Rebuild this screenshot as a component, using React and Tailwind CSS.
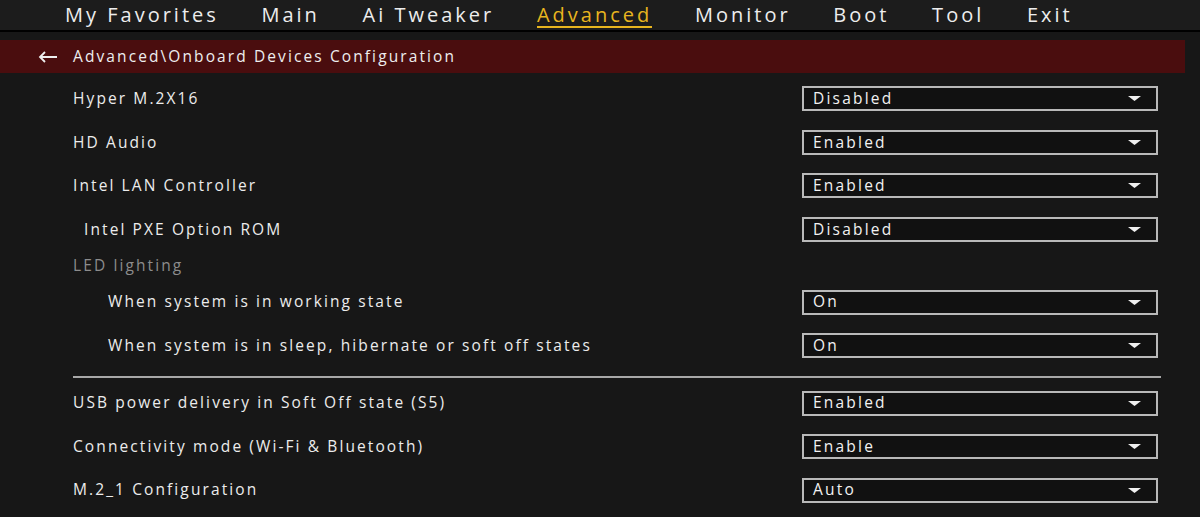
import React from 'react';

const tabs = ['My Favorites', 'Main', 'Ai Tweaker', 'Advanced', 'Monitor', 'Boot', 'Tool', 'Exit'];

const Caret = () => (
  <svg width="13" height="5" viewBox="0 0 13 5" className="shrink-0">
    <polygon points="0,0 13,0 6.5,5" fill="#f0f0f0" />
  </svg>
);

const Dropdown = ({ value }) => (
  <div className="w-[356px] h-[25px] border-2 border-[#b9b9b9] bg-[#111111] flex items-center justify-between pl-[9px] pr-[15px]">
    <span className="text-[15.5px] text-[#f2f2f2] leading-none tracking-[2.2px] font-medium">{value}</span>
    <Caret />
  </div>
);

const Row = ({ label, value, indent = 'pl-[73px]' }) => (
  <div className={`h-[43.5px] flex items-center justify-between pr-[42px] ${indent}`}>
    <span className="text-[15.5px] text-[#ececec] tracking-[2.1px] font-medium">{label}</span>
    {value && <Dropdown value={value} />}
  </div>
);

export default function App() {
  return (
    <div className="w-[1200px] h-[517px] overflow-hidden bg-[#171717] font-['Open_Sans',sans-serif]">
      {/* top tabs */}
      <div className="h-[32px] bg-[#1c1c1c] border-b-2 border-black flex items-start pl-[65px] gap-[42.7px] pt-[3px]">
        {tabs.map((t) => (
          <span
            key={t}
            className={`text-[20px] leading-[23px] tracking-[3px] font-medium ${
              t === 'Advanced' ? 'text-[#e8b51f] border-b-2 border-[#e8b51f]' : 'text-[#ededed]'
            }`}
          >
            {t}
          </span>
        ))}
      </div>

      {/* breadcrumb bar */}
      <div className="mt-[8px] mr-[15px] h-[33px] bg-[#4a0d0e] flex items-center">
        <svg width="20" height="12" viewBox="0 0 20 12" className="ml-[38px] mr-[15px]">
          <path d="M19 6H2M7 1L2 6l5 5" stroke="#eeeeee" strokeWidth="1.8" fill="none" />
        </svg>
        <span className="text-[15.5px] text-[#eeeeee] tracking-[2.1px] font-medium">Advanced\Onboard Devices Configuration</span>
      </div>

      <div className="mt-[4px] flex flex-col">
        <Row label="Hyper M.2X16" value="Disabled" />
        <Row label="HD Audio" value="Enabled" />
        <Row label="Intel LAN Controller" value="Enabled" />
        <Row label="Intel PXE Option ROM" value="Disabled" indent="pl-[84px]" />
        <div className="h-[29.25px] flex items-center pl-[73px]">
          <span className="text-[15.5px] text-[#8c8c8c] tracking-[2.1px] font-medium">LED lighting</span>
        </div>
        <Row label="When system is in working state" value="On" indent="pl-[108px]" />
        <Row label="When system is in sleep, hibernate or soft off states" value="On" indent="pl-[108px]" />
        <div className="pt-[9px] pb-[3px] pl-[73px] pr-[39px]">
          <div className="h-[2px] bg-[#a8a8a8]" />
        </div>
        <Row label="USB power delivery in Soft Off state (S5)" value="Enabled" />
        <Row label="Connectivity mode (Wi-Fi & Bluetooth)" value="Enable" />
        <Row label="M.2_1 Configuration" value="Auto" />
      </div>
    </div>
  );
}
